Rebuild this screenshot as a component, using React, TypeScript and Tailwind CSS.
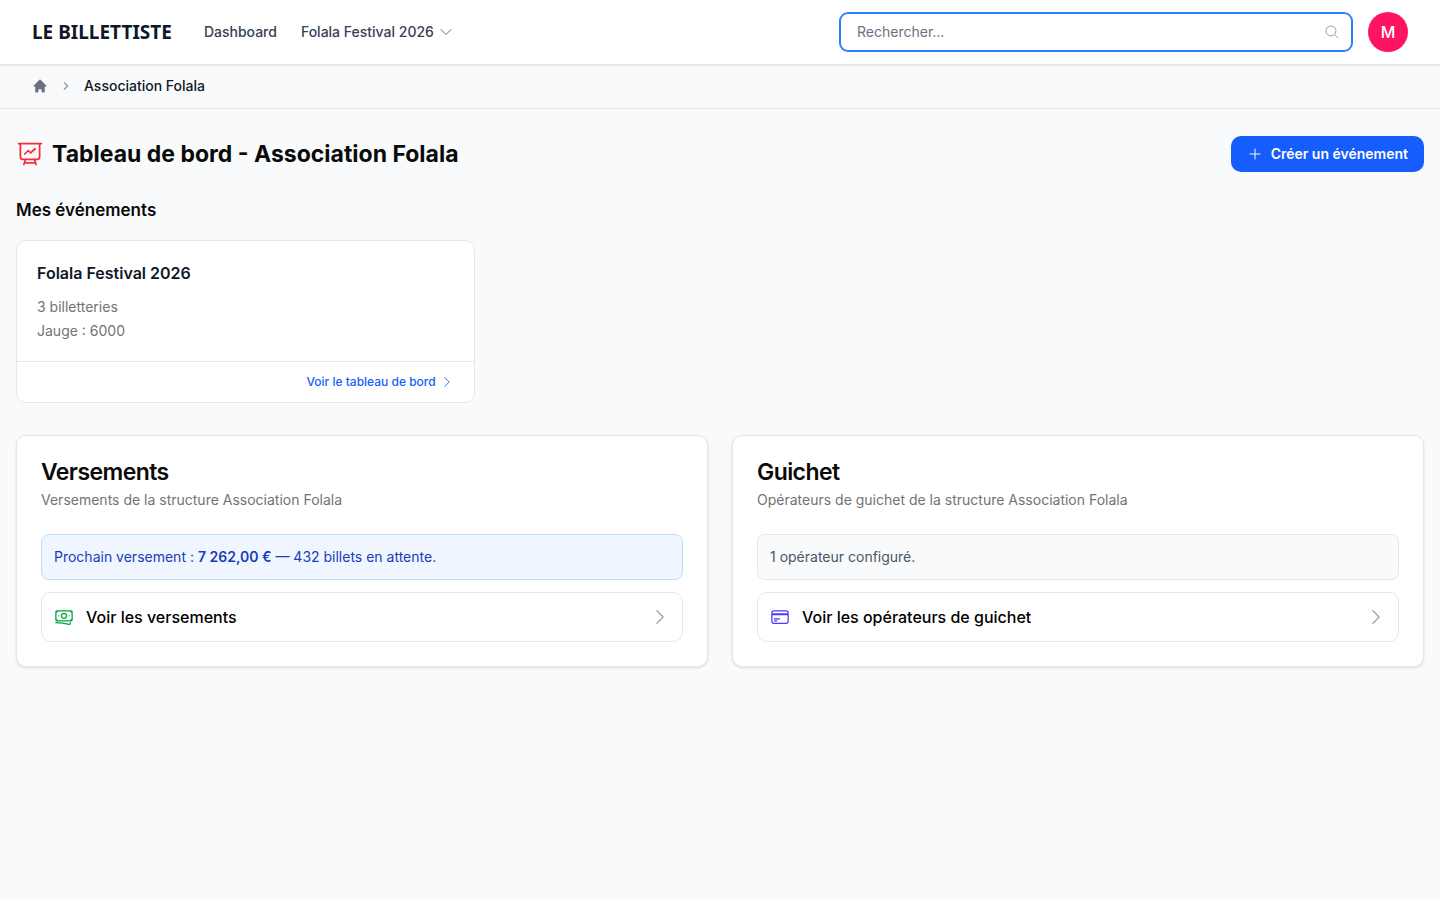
import React from 'react';
import { HiChevronRight, HiHome } from 'react-icons/hi';
import {
  HiOutlineBanknotes,
  HiOutlineChevronDown,
  HiOutlineChevronRight,
  HiOutlineCreditCard,
  HiOutlineMagnifyingGlass,
  HiOutlinePlus,
  HiOutlinePresentationChartLine,
} from 'react-icons/hi2';

const events = [
  { name: 'Folala Festival 2026', ticketing: '3 billetteries', capacity: 'Jauge : 6000' },
];

function Header() {
  return (
    <header className="relative flex h-16 items-center justify-between bg-white px-8 shadow-[0_1px_0_#e5e7eb,0_1px_3px_rgba(0,0,0,0.1),0_1px_2px_rgba(0,0,0,0.1)]">
      <div className="flex items-center gap-8">
        <a href="#" className="font-['Noto_Sans',sans-serif] text-[19px] leading-6 font-bold text-gray-900">
          LE BILLETTISTE
        </a>
        <nav aria-label="Navigation principale" className="flex items-center gap-6 text-sm font-medium text-gray-700">
          <a href="#">Dashboard</a>
          <button type="button" className="flex items-center gap-1">
            Folala Festival 2026
            <HiOutlineChevronDown className="size-4 text-gray-500" />
          </button>
        </nav>
      </div>
      <div className="flex grow items-center justify-end gap-4">
        <div className="relative w-full max-w-lg">
          <input
            type="search"
            aria-label="Rechercher"
            placeholder="Rechercher..."
            className="block w-full rounded-lg border border-blue-500 bg-white py-2 pr-10 pl-4 text-sm leading-5 ring-1 ring-blue-500 outline-none placeholder:text-gray-500"
          />
          <HiOutlineMagnifyingGlass className="pointer-events-none absolute inset-y-0 right-3 my-auto size-4 text-gray-400" />
        </div>
        <button
          type="button"
          aria-label="Mon compte"
          className="flex size-10 shrink-0 items-center justify-center rounded-full bg-[#ff1461] font-medium text-white"
        >
          M
        </button>
      </div>
    </header>
  );
}

function Breadcrumb() {
  return (
    <nav aria-label="Fil d'Ariane" className="border-b border-gray-200 px-8 py-3">
      <ol className="flex items-center text-sm font-medium">
        <li>
          <a href="#" aria-label="Accueil" className="block text-gray-500">
            <HiHome className="size-4" />
          </a>
        </li>
        <li className="flex items-center">
          <HiChevronRight className="mx-2.5 size-4 text-gray-400" />
          <span aria-current="page" className="text-gray-900">Association Folala</span>
        </li>
      </ol>
    </nav>
  );
}

function EventCard({ event }: { event: (typeof events)[number] }) {
  return (
    <article className="rounded-[10px] border border-gray-200 bg-white">
      <div className="p-5">
        <h3 className="font-semibold text-gray-900">{event.name}</h3>
        <div className="mt-3 space-y-1 text-sm text-neutral-500">
          <p>{event.ticketing}</p>
          <p>{event.capacity}</p>
        </div>
      </div>
      <div className="flex justify-end border-t border-gray-200 px-5 py-3">
        <a href="#" className="flex items-center gap-1 text-xs font-medium text-blue-600">
          Voir le tableau de bord
          <HiOutlineChevronRight className="size-3.5" />
        </a>
      </div>
    </article>
  );
}

interface PanelProps {
  title: string;
  description: string;
  notice: React.ReactNode;
  linkLabel: string;
  icon: React.ReactNode;
}

function Panel({ title, description, notice, linkLabel, icon }: PanelProps) {
  return (
    <section className="rounded-[10px] border border-gray-200 bg-white p-6 shadow-sm">
      <h2 className="text-[23px] leading-6 font-semibold tracking-tight">{title}</h2>
      <p className="mt-1.5 text-sm text-neutral-500">{description}</p>
      <div className="mt-6 space-y-3">
        {notice}
        <a href="#" className="flex items-center gap-3 rounded-[10px] border border-gray-200 p-3 font-medium text-black">
          {icon}
          <span className="grow">{linkLabel}</span>
          <HiOutlineChevronRight className="size-5 text-gray-400" />
        </a>
      </div>
    </section>
  );
}

export default function App() {
  return (
    <div className="min-h-screen bg-gray-50 font-['Inter',sans-serif] text-neutral-950">
      <Header />
      <Breadcrumb />
      <main className="px-4 pt-[27px] pb-8">
        <div className="flex items-center justify-between">
          <h1 className="flex items-center gap-2 text-[23px] leading-8 font-bold">
            <HiOutlinePresentationChartLine className="size-7 text-red-500" />
            Tableau de bord - Association Folala
          </h1>
          <button
            type="button"
            className="flex h-9 items-center gap-2 rounded-[10px] bg-blue-600 px-4 text-sm font-semibold text-white"
          >
            <HiOutlinePlus className="size-4" />
            Créer un événement
          </button>
        </div>

        <h2 className="mt-6 mb-4 text-[17px] leading-7 font-semibold">Mes événements</h2>
        <div className="grid grid-cols-1 gap-4 md:grid-cols-2 lg:grid-cols-3">
          {events.map((event) => (
            <EventCard key={event.name} event={event} />
          ))}
        </div>

        <div className="mt-8 grid grid-cols-1 gap-6 lg:grid-cols-2">
          <Panel
            title="Versements"
            description="Versements de la structure Association Folala"
            notice={
              <p className="rounded-lg border border-blue-200 bg-blue-50 p-3 text-sm text-blue-800">
                Prochain versement : <strong className="font-semibold">7 262,00 €</strong> — 432 billets en attente.
              </p>
            }
            linkLabel="Voir les versements"
            icon={<HiOutlineBanknotes className="size-5 text-green-600" />}
          />
          <Panel
            title="Guichet"
            description="Opérateurs de guichet de la structure Association Folala"
            notice={
              <p className="rounded-lg border border-gray-200 bg-gray-50 p-3 text-sm text-gray-600">
                1 opérateur configuré.
              </p>
            }
            linkLabel="Voir les opérateurs de guichet"
            icon={<HiOutlineCreditCard className="size-5 text-indigo-600" />}
          />
        </div>
      </main>
    </div>
  );
}
